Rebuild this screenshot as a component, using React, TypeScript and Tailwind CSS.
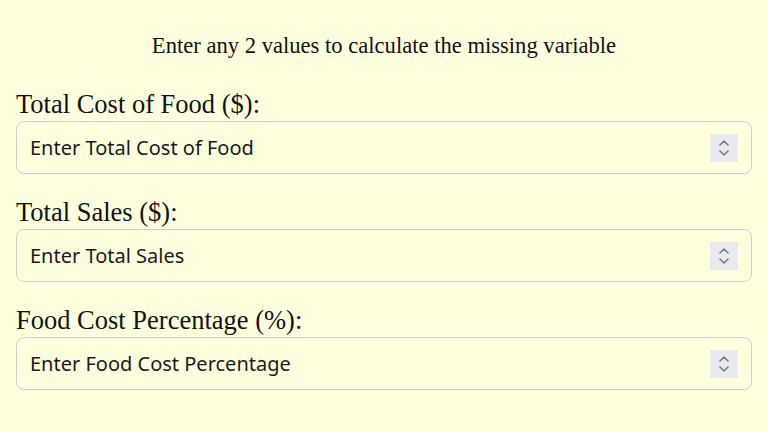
import { useState } from 'react';

function Spinner() {
  return (
    <div className="pointer-events-none absolute right-[14px] top-1/2 flex h-[28px] w-[28px] -translate-y-1/2 items-center justify-center bg-[#e9e9ef]">
      <svg width="14" height="22" viewBox="0 0 14 22" fill="none" stroke="#7a7a80" strokeWidth="1.6" strokeLinecap="round" strokeLinejoin="round">
        <path d="M3 8 L7 4 L11 8" />
        <path d="M3 14 L7 18 L11 14" />
      </svg>
    </div>
  );
}

const fields = [
  { name: 'cost', label: 'Total Cost of Food ($):', placeholder: 'Enter Total Cost of Food' },
  { name: 'sales', label: 'Total Sales ($):', placeholder: 'Enter Total Sales' },
  { name: 'percent', label: 'Food Cost Percentage (%):', placeholder: 'Enter Food Cost Percentage' },
];

export default function App() {
  const [values, setValues] = useState<Record<string, string>>({ cost: '', sales: '', percent: '' });

  return (
    <div className="min-h-screen w-full bg-[#ffffe0] px-[16px] pt-[34px] font-['Liberation_Serif',serif] text-[#111]">
      <p className="text-center text-[22.6px] leading-[24px]">Enter any 2 values to calculate the missing variable</p>

      <div className="mt-[29px] flex flex-col gap-[21px]">
        {fields.map(f => (
          <div key={f.name}>
            <label htmlFor={f.name} className="block text-[26.5px] leading-[34px]">
              {f.label}
            </label>
            <div className="relative">
              <input
                id={f.name}
                type="text"
                inputMode="decimal"
                value={values[f.name]}
                onChange={e => setValues(prev => ({ ...prev, [f.name]: e.target.value }))}
                placeholder={f.placeholder}
                className="block h-[53px] w-full rounded-[8px] border border-[#cfcfcf] bg-transparent px-[13px] font-['Noto_Sans',sans-serif] text-[20px] text-[#111] placeholder-[#1a1a1a] outline-none"
              />
              <Spinner />
            </div>
          </div>
        ))}
      </div>
    </div>
  );
}
